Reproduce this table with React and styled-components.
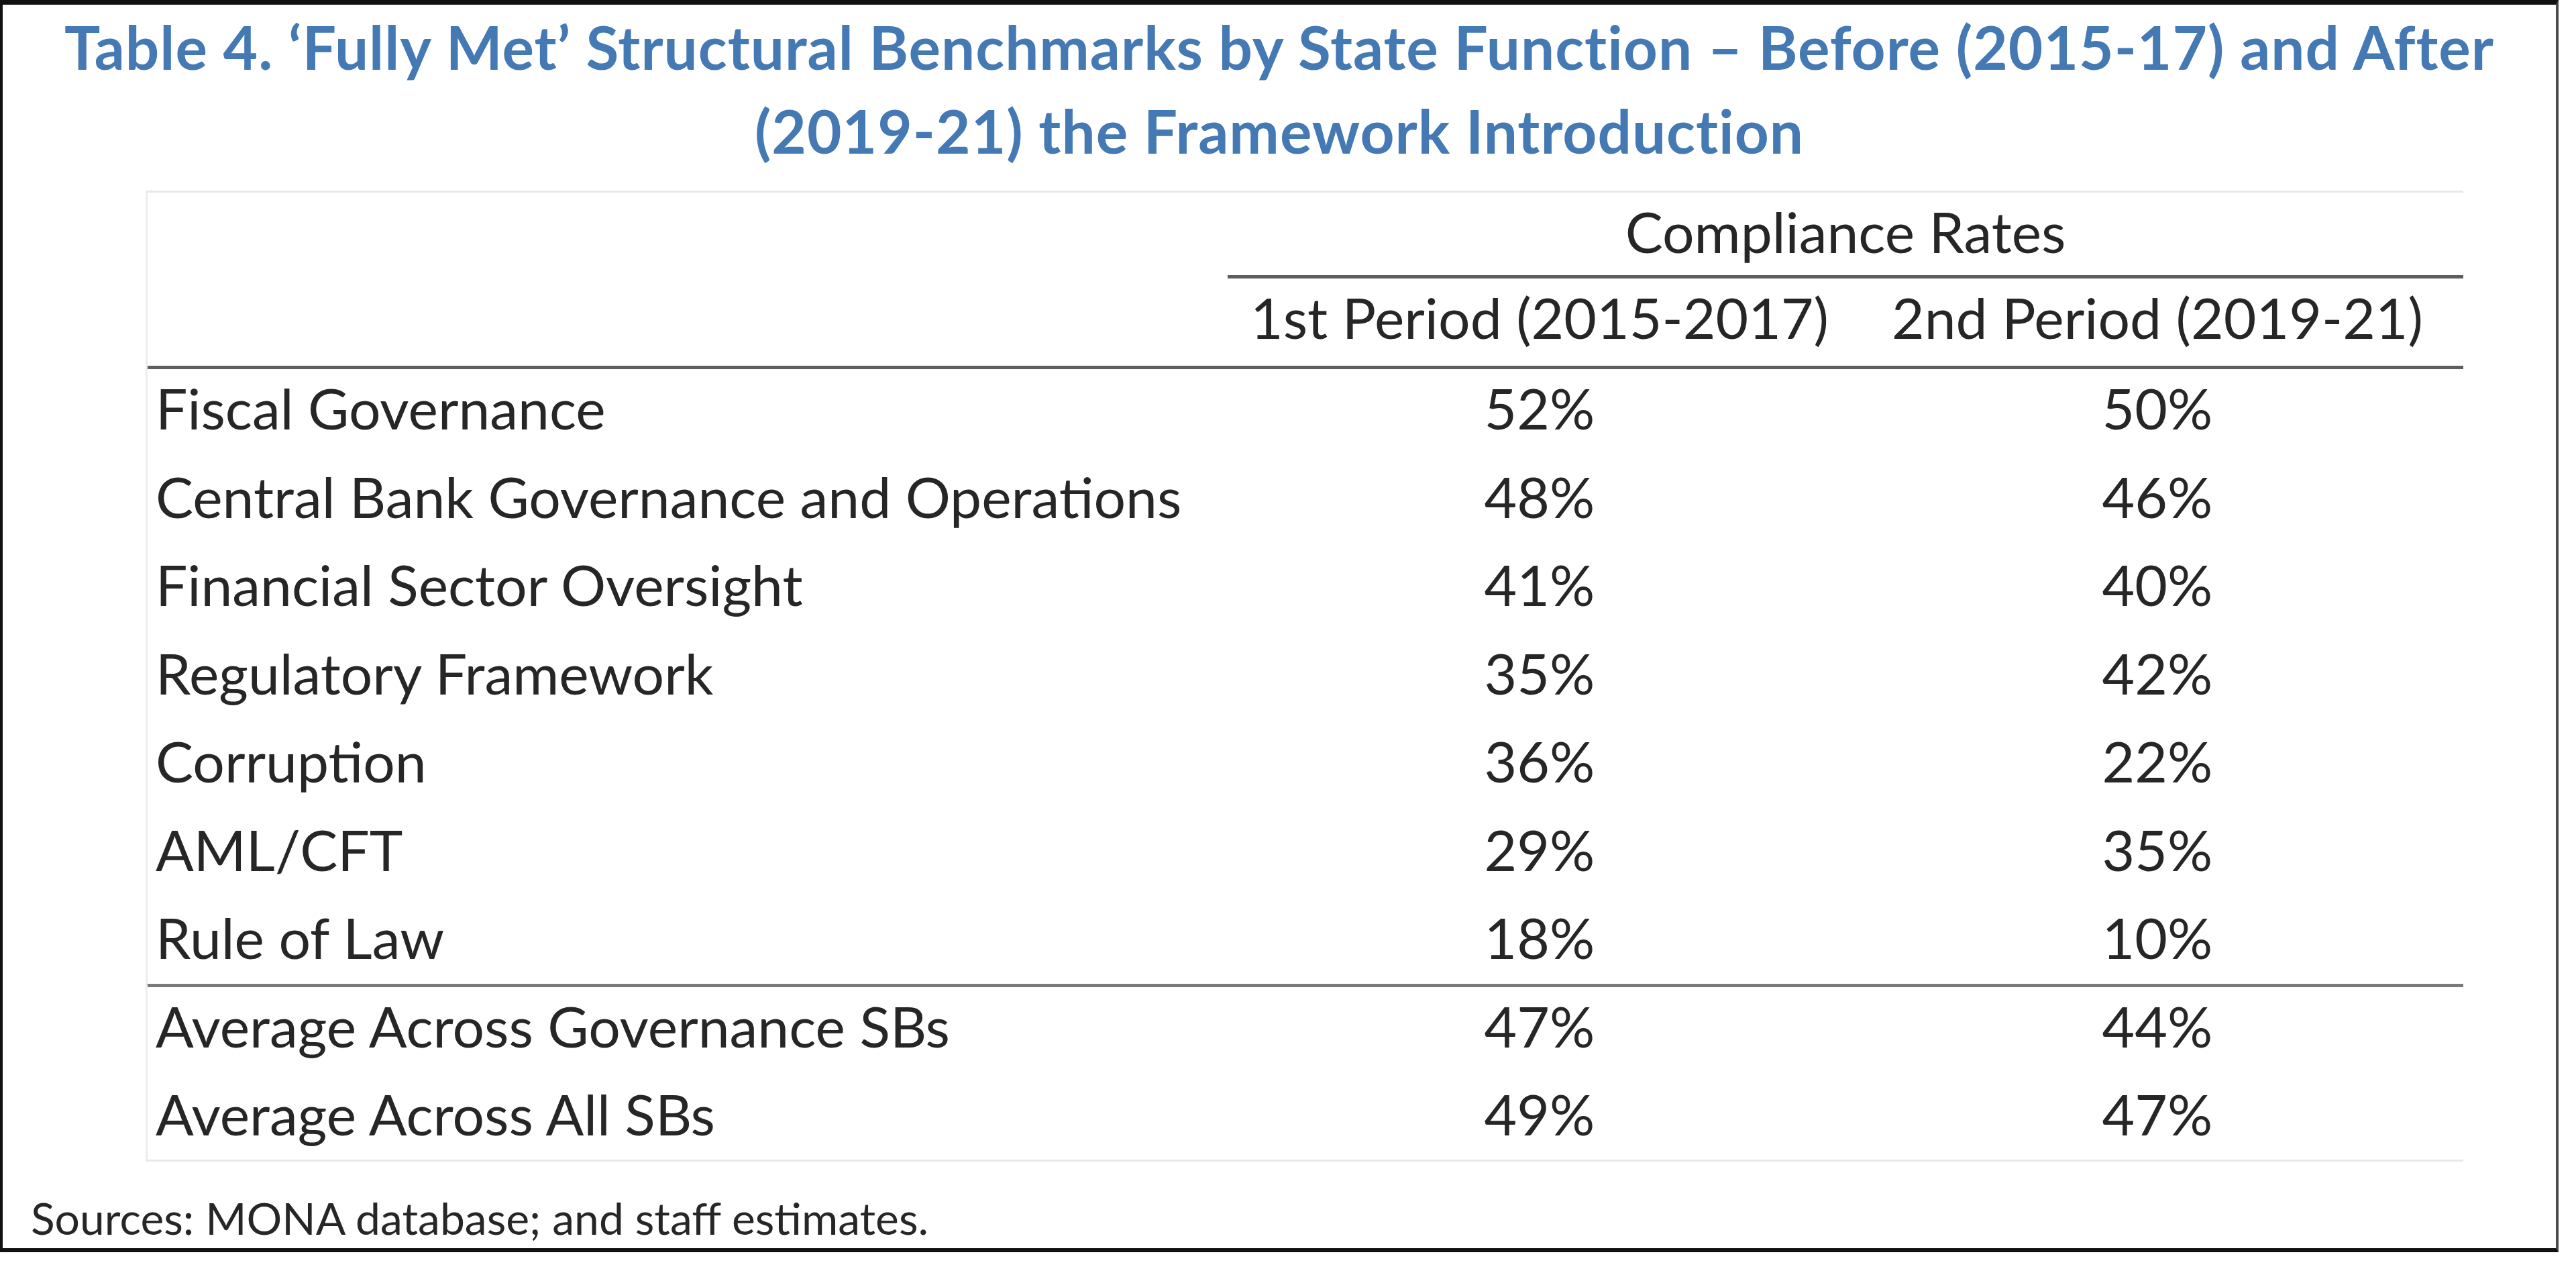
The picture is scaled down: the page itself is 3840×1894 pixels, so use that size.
import React from 'react';
import styled, { createGlobalStyle } from 'styled-components';

const GlobalStyle = createGlobalStyle`
  html, body {
    margin: 0;
    padding: 0;
    background: #ffffff;
  }
  body {
    font-family: Lato, "Open Sans", sans-serif;
    color: #262626;
  }
`;

const Frame = styled.div`
  box-sizing: border-box;
  width: 3814px;
  height: 1866px;
  border-top: 7px solid #111;
  border-left: 4px solid #111;
  border-right: 4px solid #4a4a4a;
  border-bottom: 6px solid #111;
  display: flex;
  flex-direction: column;
`;

const Title = styled.h1`
  margin: 0;
  font-family: Lato, sans-serif;
  font-weight: 700;
  font-size: 89px;
  letter-spacing: 1px;
  line-height: 125px;
  color: #4479b3;
  text-align: center;
`;

const Table = styled.div`
  margin: 27px 0 0 213px;
  width: 3455px;
  box-sizing: border-box;
  border-top: 3px solid #e8e8e8;
  border-bottom: 3px solid #e8e8e8;
  border-left: 3px solid #ececec;
  font-size: 84px;
`;

const COLS = '1610px 930px 912px';

const Head = styled.div`
  display: grid;
  grid-template-columns: ${COLS};
  grid-template-rows: 128px 130px;
  border-bottom: 5px solid #5e5e5e;
`;

const Cell = styled.div`
  box-sizing: border-box;
  padding-top: 7px;
  padding-left: ${(p) => (p.$label ? '12px' : '0')};
  white-space: nowrap;
  text-align: ${(p) => (p.$label ? 'left' : 'center')};
`;

const Spanner = styled(Cell)`
  grid-column: 2 / span 2;
  border-bottom: 5px solid #5e5e5e;
`;

const Row = styled.div`
  display: grid;
  grid-template-columns: ${COLS};
  box-sizing: border-box;
  height: 131.5px;
  border-bottom: ${(p) => (p.$rule ? '5px solid #7a7a7a' : 'none')};

  &:last-child {
    height: 126px;
  }
`;

const Sources = styled.p`
  margin: auto 0 0;
  padding: 0 0 6px 42px;
  font-size: 66px;
  line-height: normal;
`;

const rows = [
  ['Fiscal Governance', '52%', '50%'],
  ['Central Bank Governance and Operations', '48%', '46%'],
  ['Financial Sector Oversight', '41%', '40%'],
  ['Regulatory Framework', '35%', '42%'],
  ['Corruption', '36%', '22%'],
  ['AML/CFT', '29%', '35%'],
  ['Rule of Law', '18%', '10%', true],
  ['Average Across Governance SBs', '47%', '44%'],
  ['Average Across All SBs', '49%', '47%'],
];

const App = () => {
  return (
    <>
      <GlobalStyle />
      <Frame>
        <Title>
          Table 4. ‘Fully Met’ Structural Benchmarks by State Function – Before (2015-17) and After
          <br />
          (2019-21) the Framework Introduction
        </Title>
        <Table>
          <Head>
            <Cell $label style={{ gridRow: '1 / span 2' }} />
            <Spanner>Compliance Rates</Spanner>
            <Cell>1st Period (2015-2017)</Cell>
            <Cell>2nd Period (2019-21)</Cell>
          </Head>
          {rows.map(([label, a, b, rule]) => (
            <Row key={label} $rule={rule}>
              <Cell $label>{label}</Cell>
              <Cell>{a}</Cell>
              <Cell>{b}</Cell>
            </Row>
          ))}
        </Table>
        <Sources>Sources: MONA database; and staff estimates.</Sources>
      </Frame>
    </>
  );
};

export default App;
